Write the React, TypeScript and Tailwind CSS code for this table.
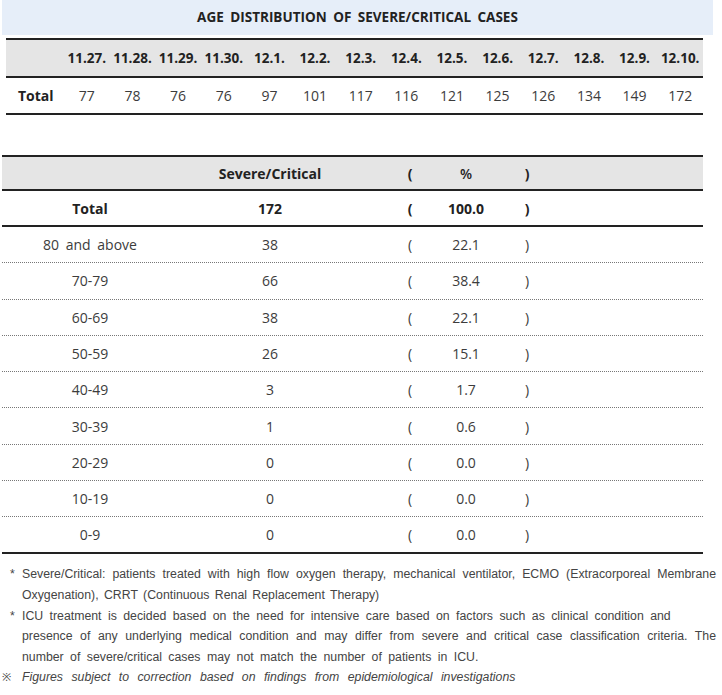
const dates = ['11.27.', '11.28.', '11.29.', '11.30.', '12.1.', '12.2.', '12.3.', '12.4.', '12.5.', '12.6.', '12.7.', '12.8.', '12.9.', '12.10.'];
const totals = [77, 78, 76, 76, 97, 101, 117, 116, 121, 125, 126, 134, 149, 172];

const ages = [
  { label: '80 and above', count: 38, pct: '22.1' },
  { label: '70-79', count: 66, pct: '38.4' },
  { label: '60-69', count: 38, pct: '22.1' },
  { label: '50-59', count: 26, pct: '15.1' },
  { label: '40-49', count: 3, pct: '1.7' },
  { label: '30-39', count: 1, pct: '0.6' },
  { label: '20-29', count: 0, pct: '0.0' },
  { label: '10-19', count: 0, pct: '0.0' },
  { label: '0-9', count: 0, pct: '0.0' },
];

const font = { fontFamily: '"Open Sans", "Noto Sans", sans-serif' };

function DailyTable() {
  return (
    <div className="ml-[6px] w-[697px]">
      <div className="grid grid-cols-[58px_repeat(14,1fr)] h-[40px] items-center bg-[#e5e5e5] border-t-2 border-b-2 border-[#222] text-[13.5px] font-bold text-[#222]">
        <div />
        {dates.map((d) => (
          <div key={d} className="text-center">{d}</div>
        ))}
      </div>
      <div className="grid grid-cols-[58px_repeat(14,1fr)] h-[37px] items-center border-b-2 border-[#222] text-[14px] text-[#3c3c3c]">
        <div className="pl-[12px] font-bold text-[#222]">Total</div>
        {totals.map((t, i) => (
          <div key={i} className="text-center">{t}</div>
        ))}
      </div>
    </div>
  );
}

function AgeTable() {
  return (
    <div className="ml-[2px] w-[701px] text-[14px]">
      <div className="grid grid-cols-[176px_184px_68px_72px_50px_1fr] h-[36px] items-center bg-[#e5e5e5] border-t-2 border-b-2 border-[#222] font-bold text-[#222]">
        <div />
        <div className="text-center">Severe/Critical</div>
        <div className="pl-7 text-center">(</div>
        <div className="text-center font-semibold">%</div>
        <div className="text-center">)</div>
        <div />
      </div>
      <div className="grid grid-cols-[176px_184px_68px_72px_50px_1fr] h-[36px] items-center border-b-2 border-[#222] font-bold text-[#222]">
        <div className="text-center">Total</div>
        <div className="text-center">172</div>
        <div className="pl-7 text-center">(</div>
        <div className="text-center">100.0</div>
        <div className="text-center">)</div>
        <div />
      </div>
      {ages.map((a, i) => (
        <div
          key={a.label}
          className={
            i === ages.length - 1
              ? 'grid grid-cols-[176px_184px_68px_72px_50px_1fr] h-[37px] items-center border-b-2 border-[#222] text-[#3c3c3c]'
              : 'grid grid-cols-[176px_184px_68px_72px_50px_1fr] h-[36.3px] items-center border-b border-dotted border-[#777] text-[#3c3c3c]'
          }
        >
          <div className="text-center [word-spacing:3px]">{a.label}</div>
          <div className="text-center">{a.count}</div>
          <div className="pl-7 text-center">(</div>
          <div className="text-center">{a.pct}</div>
          <div className="text-center">)</div>
          <div />
        </div>
      ))}
    </div>
  );
}

function Notes() {
  return (
    <div
      className="mt-[10px] w-[716px] text-[12.3px] leading-[20.6px] text-[#444] [word-spacing:2px]"
      style={{ fontFamily: '"Liberation Sans", "Noto Sans", sans-serif' }}
    >
      <div className="flex">
        <span className="w-[22px] shrink-0 pl-[10px]">*</span>
        <div className="flex-1">
          <div className="whitespace-nowrap [text-align-last:justify]">
            Severe/Critical: patients treated with high flow oxygen therapy, mechanical ventilator, ECMO (Extracorporeal Membrane
          </div>
          <div>Oxygenation), CRRT (Continuous Renal Replacement Therapy)</div>
        </div>
      </div>
      <div className="flex">
        <span className="w-[22px] shrink-0 pl-[10px]">*</span>
        <div className="flex-1">
          <div className="[word-spacing:3px]">
            ICU treatment is decided based on the need for intensive care based on factors such as clinical condition and
          </div>
          <div className="whitespace-nowrap [text-align-last:justify]">
            presence of any underlying medical condition and may differ from severe and critical case classification criteria. The
          </div>
          <div className="[word-spacing:3px]">number of severe/critical cases may not match the number of patients in ICU.</div>
        </div>
      </div>
      <div className="flex italic">
        <span className="w-[22px] shrink-0 pl-[2px] not-italic text-[11px]">※</span>
        <p className="[word-spacing:5px]">Figures subject to correction based on findings from epidemiological investigations</p>
      </div>
    </div>
  );
}

export default function App() {
  return (
    <div className="w-[722px] h-[695px] bg-white overflow-hidden" style={font}>
      <div className="ml-[2px] w-[711px] h-[35px] bg-[#e6eef9] flex items-center justify-center text-[13.5px] font-bold text-[#222] [word-spacing:3px]">
        AGE DISTRIBUTION OF SEVERE/CRITICAL CASES
      </div>
      <div className="mt-[3px]">
        <DailyTable />
      </div>
      <div className="mt-[40px]">
        <AgeTable />
      </div>
      <Notes />
    </div>
  );
}
